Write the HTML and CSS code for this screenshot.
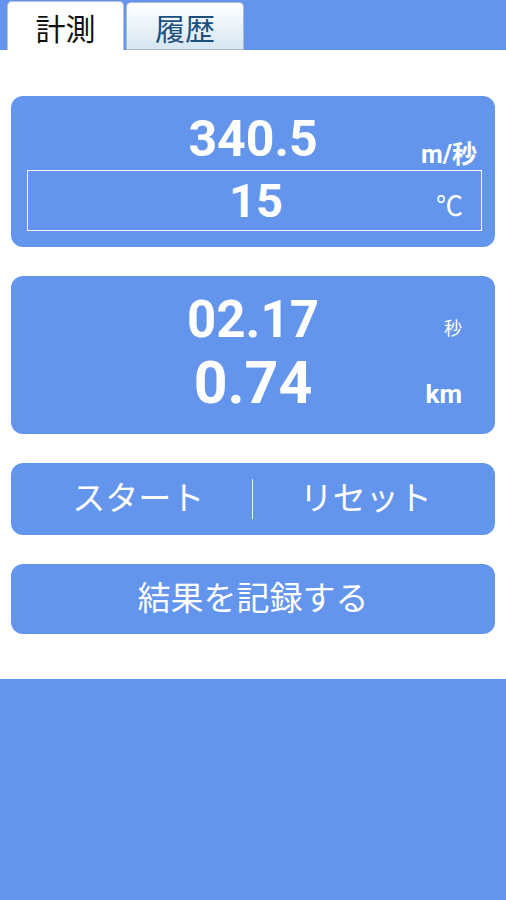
FILE: index.html
```html
<!DOCTYPE html>
<html lang="ja">
<head>
<meta charset="utf-8">
<title>計測</title>
<link rel="stylesheet" href="styles.css">
</head>
<body>
<div class="app">
  <header class="tabbar">
    <div class="tab tab-active">計測</div>
    <div class="tab tab-idle">履歴</div>
  </header>
  <main class="content">
    <section class="card card-sound">
      <div class="row row-speed">
        <span class="spacer"></span>
        <span class="num num-speed">340.5</span>
        <span class="unit unit-speed">m/秒</span>
      </div>
      <div class="row row-temp">
        <span class="spacer"></span>
        <span class="num num-temp">15</span>
        <span class="unit unit-temp">℃</span>
      </div>
    </section>
    <section class="card card-time">
      <div class="row row-time">
        <span class="spacer"></span>
        <span class="num num-time">02.17</span>
        <span class="unit unit-sec">秒</span>
      </div>
      <div class="row row-dist">
        <span class="spacer"></span>
        <span class="num num-dist">0.74</span>
        <span class="unit unit-km">km</span>
      </div>
    </section>
    <section class="card card-buttons">
      <div class="btn-half btn-start">スタート</div>
      <div class="divider"></div>
      <div class="btn-half btn-reset">リセット</div>
    </section>
    <section class="card card-record">結果を記録する</section>
  </main>
  <footer class="bottom"></footer>
</div>
</body>
</html>
```
FILE: styles.css
```css
html, body {
  margin: 0;
  padding: 0;
  background: #ffffff;
}
.app {
  width: 506px;
  height: 900px;
  display: flex;
  flex-direction: column;
  font-family: Roboto, "Noto Sans CJK JP", sans-serif;
}
.tabbar {
  height: 50px;
  background: #6495ed;
  display: flex;
  align-items: flex-end;
  padding-left: 7px;
  gap: 2px;
  box-sizing: border-box;
}
.tab {
  font-family: "Noto Sans CJK JP", sans-serif;
  font-size: 30px;
  line-height: 1;
  display: flex;
  align-items: center;
  justify-content: center;
  box-sizing: border-box;
  border-radius: 5px 5px 0 0;
}
.tab-active {
  width: 117px;
  height: 49px;
  background: #ffffff;
  color: #111111;
  border: 1px solid #b9c4d2;
  border-bottom: none;
  padding-top: 2px;
}
.tab-idle {
  width: 118px;
  height: 48px;
  background: linear-gradient(#ffffff, #d6e6f3);
  color: #1d4f7e;
  border: 1px solid #a9bed3;
  border-bottom: 1px solid #b0b8c0;
  padding-top: 2px;
}
.content {
  padding: 46px 11px 0;
  display: flex;
  flex-direction: column;
  gap: 29px;
  height: 629px;
  box-sizing: border-box;
}
.card {
  background: #6495ed;
  border-radius: 12px;
  color: #ffffff;
}
.card-sound {
  height: 151px;
  display: flex;
  flex-direction: column;
}
.row {
  display: grid;
  grid-template-columns: 1fr auto 1fr;
}
.unit {
  justify-self: end;
  line-height: 1;
}
.num {
  font-weight: 700;
  line-height: 1;
}
.row-speed {
  height: 74px;
  box-sizing: border-box;
  align-items: end;
  padding-bottom: 6px;
}
.num-speed {
  font-size: 50px;
}
.unit-speed {
  font-size: 25px;
  font-weight: 700;
  margin-right: 18px;
  margin-bottom: -3px;
}
.row-temp {
  height: 61px;
  box-sizing: border-box;
  margin: 0 13px 0 16px;
  border: 1px solid #ffffff;
  align-items: center;
}
.num-temp {
  font-size: 47px;
  margin-left: 3px;
}
.unit-temp {
  font-family: "Noto Sans CJK JP", sans-serif;
  font-size: 27px;
  margin-right: 18px;
  margin-top: 8px;
}
.card-time {
  height: 158px;
  box-sizing: border-box;
  padding: 18px 0 19px;
  display: flex;
  flex-direction: column;
  gap: 8px;
}
.row-time {
  align-items: center;
}
.num-time {
  font-size: 51px;
}
.unit-sec {
  font-family: "Noto Sans CJK JP", sans-serif;
  font-size: 18px;
  margin-right: 33px;
  margin-top: 14px;
}
.row-dist {
  align-items: baseline;
}
.num-dist {
  font-size: 59px;
}
.unit-km {
  font-size: 26px;
  font-weight: 700;
  margin-right: 33px;
}
.card-buttons {
  height: 72px;
  display: grid;
  grid-template-columns: 1fr 1px 1fr;
  align-items: center;
  padding: 0 16px 0 14px;
}
.btn-half {
  font-family: "Noto Sans CJK JP", sans-serif;
  font-size: 33px;
  text-align: center;
  line-height: 1;
  padding-bottom: 6px;
}
.divider {
  height: 40px;
  background: rgba(255, 255, 255, 0.85);
}
.card-record {
  height: 70px;
  box-sizing: border-box;
  padding-bottom: 5px;
  display: flex;
  align-items: center;
  justify-content: center;
  font-family: "Noto Sans CJK JP", sans-serif;
  font-size: 33px;
  line-height: 1;
}
.bottom {
  flex: 1;
  background: #6495ed;
}
```
